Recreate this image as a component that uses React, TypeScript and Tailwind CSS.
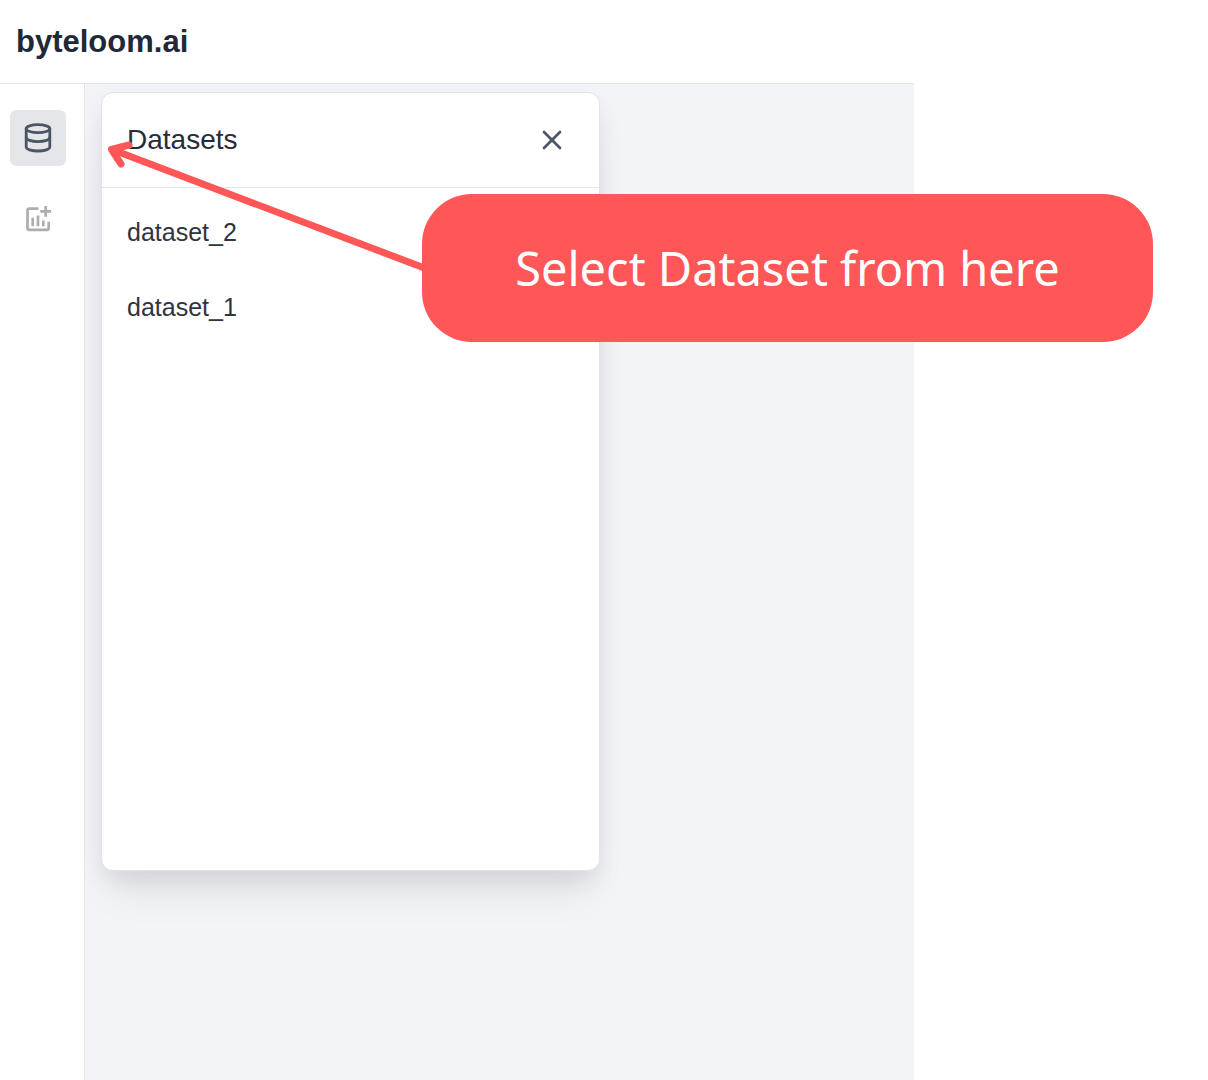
import { X } from "lucide-react";

const datasets = ["dataset_2", "dataset_1"];

function DatabaseIcon() {
  return (
    <svg
      width="32"
      height="32"
      viewBox="0 0 32 32"
      fill="none"
      stroke="currentColor"
      strokeWidth="2.800"
      strokeLinecap="round"
      strokeLinejoin="round"
      aria-hidden="true"
    >
      <ellipse cx="16" cy="6.700" rx="11.800" ry="4" />
      <path d="M4.200 6.700V25c0 2.200 5 4 11.800 4s11.800-1.800 11.800-4V6.700" />
      <path d="M4.200 15.500c0 2.300 5 4.100 11.800 4.100s11.800-1.800 11.800-4.100" />
    </svg>
  );
}

function AddChartIcon() {
  return (
    <svg
      width="32"
      height="32"
      viewBox="0 0 32 32"
      fill="none"
      stroke="currentColor"
      strokeWidth="2.700"
      strokeLinecap="butt"
      strokeLinejoin="round"
      aria-hidden="true"
    >
      <path d="M16.500 6.600H7.300Q5.500 6.600 5.500 8.400V26Q5.500 27.800 7.300 27.800H24.900Q26.700 27.800 26.700 26V19.800" />
      <path d="M23.700 4V14.800M18.300 9.400H29.100" />
      <path d="M10.700 15.800V24.200M16 13.400V24.200M21.300 18.600V24.200" />
    </svg>
  );
}

function Sidebar() {
  return (
    <nav
      aria-label="Tools"
      className="flex w-[85px] shrink-0 flex-col gap-6 border-r border-[#e2e3e7] bg-white pt-[26px] pl-2.5"
    >
      <button
        type="button"
        aria-label="Datasets"
        className="flex size-14 items-center justify-center rounded-md bg-[#e5e6ea] text-[#4b5563]"
      >
        <DatabaseIcon />
      </button>
      <button
        type="button"
        aria-label="Add chart"
        className="flex size-14 items-center justify-center rounded-md text-[#adadad]"
      >
        <AddChartIcon />
      </button>
    </nav>
  );
}

function DatasetPanel() {
  return (
    <section className="h-[779px] w-[499px] rounded-xl border border-[#e2e3e7] bg-white shadow-[0_32px_40px_-8px_rgba(0,0,0,0.05),0_12px_28px_-4px_rgba(0,0,0,0.11)]">
      <header className="flex h-[95px] items-center justify-between border-b border-[#e5e6e9] pr-[31px] pl-[25px]">
        <h2 className="text-[28px] leading-8 text-[#272c38]">Datasets</h2>
        <button type="button" aria-label="Close" className="text-[#4b5563]">
          <X size={32} strokeWidth={2} />
        </button>
      </header>
      <ul className="pt-1.5">
        {datasets.map((name) => (
          <li key={name}>
            <button
              type="button"
              className="h-[75px] w-full px-[25px] text-left text-[25px] leading-8 text-[#30343f]"
            >
              {name}
            </button>
          </li>
        ))}
      </ul>
    </section>
  );
}

function Callout() {
  return (
    <aside className="pointer-events-none absolute top-[140px] left-[107px]">
      <svg
        width="320"
        height="134"
        viewBox="0 0 320 134"
        fill="none"
        stroke="#ff5757"
        strokeWidth="7"
        aria-hidden="true"
      >
        <path d="M5 9.500 316 127.500" />
        <path d="M22 5 4.500 9.500 14 24" strokeLinecap="round" strokeLinejoin="round" />
      </svg>
      <p className="absolute top-[54px] left-[315px] flex h-[148px] w-[731px] items-center justify-center rounded-[50px] bg-[#ff5757] font-['Noto_Sans',sans-serif] text-[47px] leading-[64px] whitespace-nowrap text-white">
        Select Dataset from here
      </p>
    </aside>
  );
}

export default function App() {
  return (
    <div className="relative min-h-screen overflow-x-clip bg-white font-['Liberation_Sans',Arial,sans-serif]">
      <div className="flex min-h-screen w-full max-w-[914px] flex-col">
        <header className="flex h-[84px] items-center border-b border-[#e2e3e7] px-4">
          <h1 className="text-[31px] leading-10 font-bold text-[#1f2937]">byteloom.ai</h1>
        </header>
        <div className="flex grow">
          <Sidebar />
          <main className="grow overflow-hidden bg-[#f3f4f8] px-4 pt-2 pb-8">
            <DatasetPanel />
          </main>
        </div>
      </div>
      <Callout />
    </div>
  );
}
